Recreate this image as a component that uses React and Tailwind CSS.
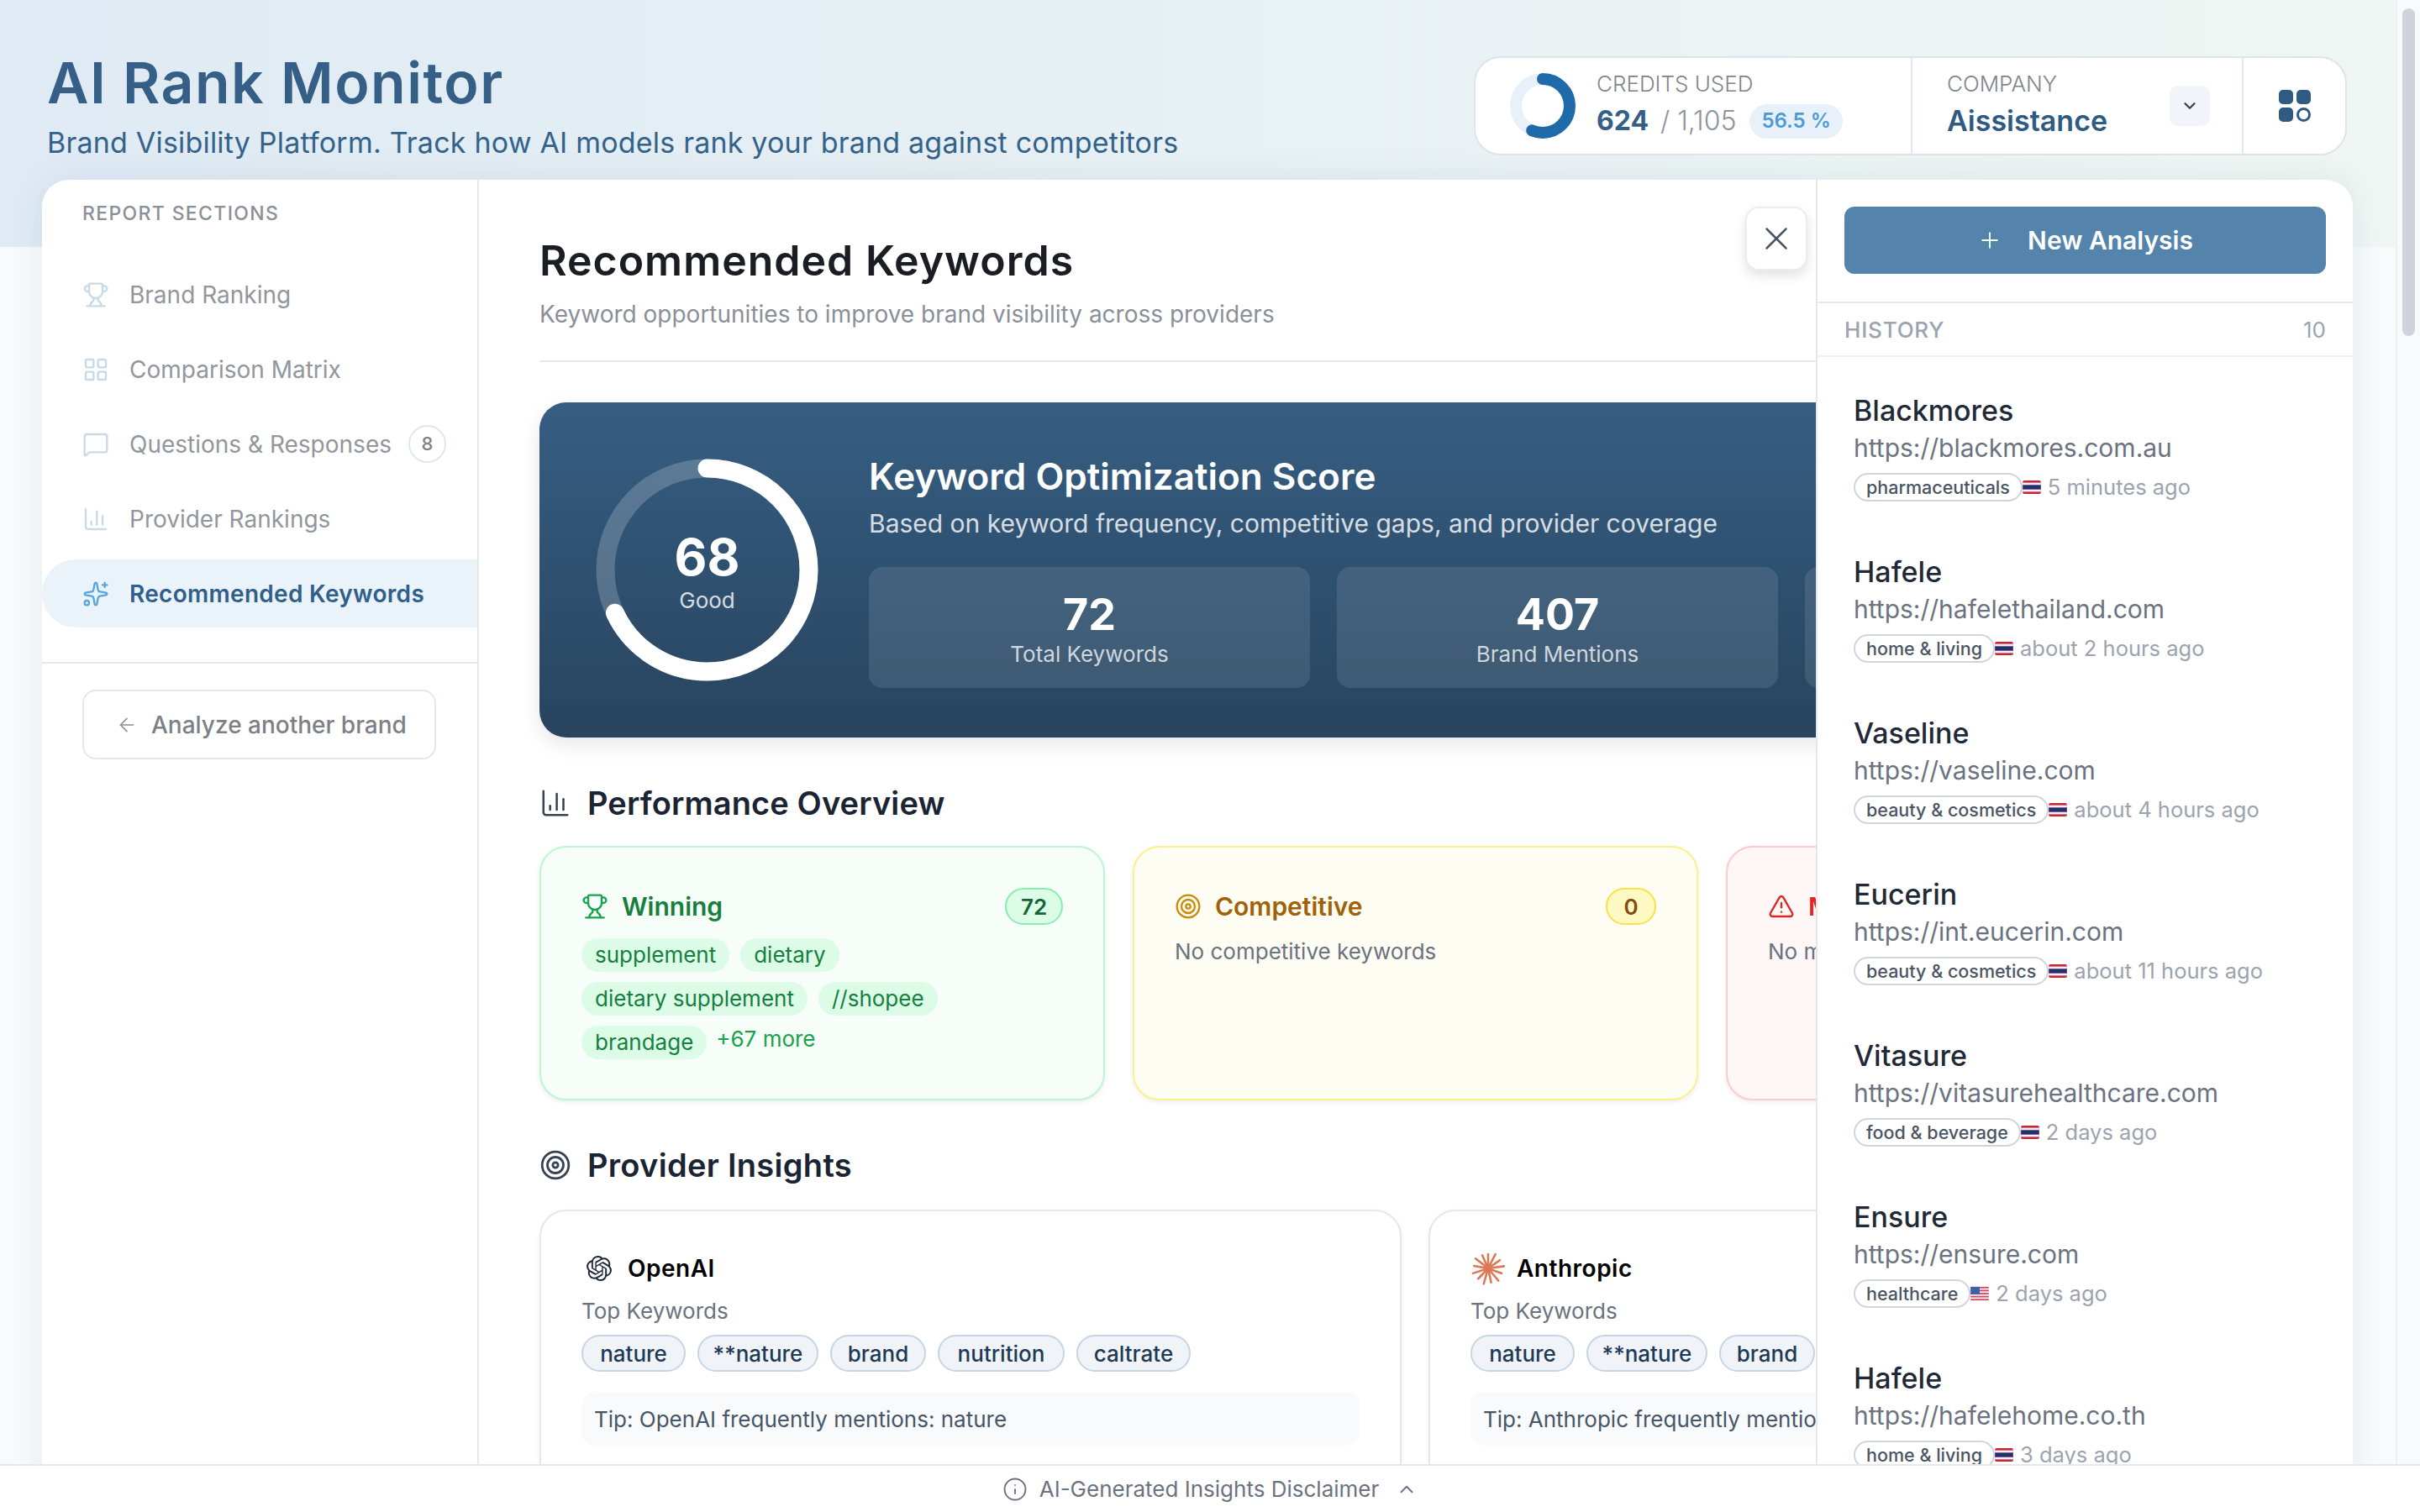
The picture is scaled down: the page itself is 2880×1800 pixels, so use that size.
import React from 'react';
import { Trophy, LayoutGrid, MessageSquare, ChartColumn, Sparkles, ArrowLeft, X, Plus, ChevronDown, ChevronUp, Info, Target, TriangleAlert } from 'lucide-react';
import { SiOpenai } from 'react-icons/si';

const NAV = [
  { label: 'Brand Ranking', icon: Trophy },
  { label: 'Comparison Matrix', icon: LayoutGrid },
  { label: 'Questions & Responses', icon: MessageSquare, badge: 8 },
  { label: 'Provider Rankings', icon: ChartColumn },
  { label: 'Recommended Keywords', icon: Sparkles, active: true },
];

const HISTORY = [
  { name: 'Blackmores', url: 'https://blackmores.com.au', tag: 'pharmaceuticals', flag: 'th', time: '5 minutes ago' },
  { name: 'Hafele', url: 'https://hafelethailand.com', tag: 'home & living', flag: 'th', time: 'about 2 hours ago' },
  { name: 'Vaseline', url: 'https://vaseline.com', tag: 'beauty & cosmetics', flag: 'th', time: 'about 4 hours ago' },
  { name: 'Eucerin', url: 'https://int.eucerin.com', tag: 'beauty & cosmetics', flag: 'th', time: 'about 11 hours ago' },
  { name: 'Vitasure', url: 'https://vitasurehealthcare.com', tag: 'food & beverage', flag: 'th', time: '2 days ago' },
  { name: 'Ensure', url: 'https://ensure.com', tag: 'healthcare', flag: 'us', time: '2 days ago' },
  { name: 'Hafele', url: 'https://hafelehome.co.th', tag: 'home & living', flag: 'th', time: '3 days ago' },
];

const WINNING_ROWS = [['supplement', 'dietary'], ['dietary supplement', '//shopee'], ['brandage']];
const KEYWORDS = [
  { label: 'nature', width: 'w-[124px]' },
  { label: '**nature', width: 'w-[144px]' },
  { label: 'brand', width: 'w-[114px]' },
  { label: 'nutrition', width: 'w-[151px]' },
  { label: 'caltrate', width: 'w-[136px]' },
];

function Flag({ code }) {
  if (code === 'us') {
    return (
      <svg viewBox="0 0 24 20" className="w-[22px] h-[18px] shrink-0">
        <rect y="1" width="24" height="18" rx="2" fill="#f3f4f6" />
        {[1, 5, 9, 13, 17].map(y => <rect key={y} y={y} width="24" height="2" fill="#d9485f" />)}
        <rect y="1" width="12" height="10" fill="#3f5fa8" />
      </svg>
    );
  }
  return (
    <svg viewBox="0 0 24 20" className="w-[22px] h-[18px] shrink-0">
      <rect y="1" width="24" height="18" rx="2" fill="#c8243c" />
      <rect y="4" width="24" height="12" fill="#f5f5f5" />
      <rect y="7" width="24" height="6" fill="#2d2a6e" />
    </svg>
  );
}

function AnthropicMark() {
  const rays = [0, 27, 55, 82, 110, 140, 168, 196, 224, 252, 280, 308, 336];
  return (
    <svg viewBox="0 0 40 40" className="w-[40px] h-[40px] shrink-0">
      {rays.map((r, i) => (
        <line key={r} x1="20" y1="20" x2="20" y2={i % 2 ? 1 : 3} stroke="#dc7853" strokeWidth="2.6" strokeLinecap="round" transform={`rotate(${r} 20 20)`} />
      ))}
    </svg>
  );
}

function Sidebar() {
  return (
    <aside className="w-[520px] shrink-0 border-r-2 border-[#e5e7eb] flex flex-col">
      <div className="pt-[28px] pl-[48px] text-[23px] leading-[24px] font-medium tracking-[1.35px] text-[#8b9098]">REPORT SECTIONS</div>
      <nav className="mt-[44px] flex flex-col gap-[8px]">
        {NAV.map(item => {
          const Icon = item.icon;
          return (
            <div key={item.label} className={`h-[81px] flex items-center pl-[48px] rounded-l-[40px] ${item.active ? 'bg-[#eaf2fa]' : ''}`}>
              <Icon strokeWidth={1.75} className={`w-[32px] h-[32px] shrink-0 ${item.active ? 'text-[#5aa5dc]' : 'text-[#c9d9e8]'}`} />
              <span className={`ml-[24px] text-[28px] ${item.active ? 'font-semibold tracking-[0.3px] text-[#2f5f8a]' : 'text-[#92969d]'}`}>{item.label}</span>
              {item.badge && (
                <span className="ml-auto mr-[37px] w-[45px] h-[45px] rounded-full border-2 border-[#e2e6ec] flex items-center justify-center text-[22px] font-medium text-[#7c8087]">{item.badge}</span>
              )}
            </div>
          );
        })}
      </nav>
      <div className="mt-[41px] border-t-2 border-[#e5e7eb] pt-[31px] pl-[48px]">
        <button className="w-[421px] h-[83px] rounded-[16px] border-2 border-[#e3e6ea] flex items-center pl-[38px] gap-[16px] text-[28px] font-medium text-[#7c8087]">
          <ArrowLeft strokeWidth={1.5} className="w-[26px] h-[26px] text-[#8b9098]" />
          Analyze another brand
        </button>
      </div>
    </aside>
  );
}

function ScoreRing() {
  const r = 121;
  const c = 2 * Math.PI * r;
  return (
    <div className="relative w-[267px] h-[267px] shrink-0">
      <svg viewBox="0 0 267 267" className="w-full h-full -rotate-90">
        <circle cx="133.5" cy="133.5" r={r} fill="none" stroke="rgba(255,255,255,0.2)" strokeWidth="22" />
        <circle cx="133.5" cy="133.5" r={r} fill="none" stroke="#fff" strokeWidth="22" strokeLinecap="round" strokeDasharray={`${c * 0.68} ${c}`} />
      </svg>
      <div className="absolute inset-0 flex flex-col items-center text-white">
        <div className="mt-[86px] text-[60px] leading-[64px] font-bold">68</div>
        <div className="mt-[4px] text-[26px] leading-[32px] text-white/80">Good</div>
      </div>
    </div>
  );
}

function Stat({ value, label }) {
  return (
    <div className="w-[525px] h-[144px] shrink-0 rounded-[16px] bg-white/10 flex flex-col items-center text-white">
      {value && <div className="mt-[29px] text-[52px] leading-[56px] font-bold">{value}</div>}
      {label && <div className="mt-[3px] text-[26px] leading-[32px] text-white/75">{label}</div>}
    </div>
  );
}

function OverviewCard({ tone, icon: Icon, title, count, children }) {
  const tones = {
    green: { box: 'border-[#bbf7d0] bg-[#f7fdf9]', icon: 'text-[#16a34a]', title: 'text-[#15803d]', badge: 'bg-[#dcfce7] border-[#86efac] text-[#166534] w-[69px]' },
    yellow: { box: 'border-[#fef08a] bg-[#fefdf3]', icon: 'text-[#ca8a04]', title: 'text-[#a16207]', badge: 'bg-[#fef9c3] border-[#fde047] text-[#854d0e] w-[60px]' },
    red: { box: 'border-[#fecaca] bg-[#fff6f6]', icon: 'text-[#dc2626]', title: 'text-[#dc2626]', badge: 'bg-[#fee2e2] border-[#fca5a5] text-[#991b1b] w-[60px]' },
  }[tone];
  return (
    <div className={`w-[673px] h-[303px] shrink-0 rounded-[32px] border-2 p-[48px] shadow-[0_2px_6px_rgba(0,0,0,0.08)] ${tones.box}`}>
      <div className="h-[44px] flex items-center justify-between">
        <div className="flex items-center gap-[16px]">
          <Icon strokeWidth={1.75} className={`w-[32px] h-[32px] ${tones.icon}`} />
          <span className={`text-[30px] font-semibold ${tones.title}`}>{title}</span>
        </div>
        <span className={`h-[44px] rounded-full border-2 flex items-center justify-center text-[26px] font-semibold ${tones.badge}`}>{count}</span>
      </div>
      <div className="mt-[16px]">{children}</div>
    </div>
  );
}

function ProviderCard({ name, logo }) {
  return (
    <div className="w-[1026px] h-[360px] shrink-0 rounded-[32px] border-2 border-[#e5e7eb] bg-white px-[48px] pt-[50px] shadow-[0_2px_6px_rgba(0,0,0,0.05)]">
      <div className="h-[36px] flex items-center gap-[18px]">
        <div className="w-[37px] pl-[4px] flex justify-center">{logo}</div>
        <span className="text-[28px] font-semibold tracking-[0.5px] text-black">{name}</span>
      </div>
      <div className="mt-[17px] text-[26px] leading-[32px] text-[#6b7280]">Top Keywords</div>
      <div className="mt-[12px] flex gap-[14px]">
        {KEYWORDS.map(k => (
          <span key={k.label} className={`h-[44px] rounded-full border-2 border-[#c5d5e3] bg-[#f0f4f8] flex items-center justify-center text-[26px] font-medium text-[#1e3a55] ${k.width}`}>{k.label}</span>
        ))}
      </div>
      <div className="mt-[24px] h-[64px] w-[926px] rounded-[16px] bg-[#f8fafc] flex items-center px-[15px] text-[26px] text-[#475569]">Tip: {name} frequently mentions: nature</div>
    </div>
  );
}

function MainPanel() {
  return (
    <section className="relative w-[1591px] shrink-0 overflow-hidden pl-[72px] pt-[68px]">
      <button className="absolute left-[1507px] top-[32px] w-[74px] h-[76px] rounded-[16px] bg-white border-2 border-[#ececec] shadow-[0_6px_14px_rgba(0,0,0,0.12)] flex items-center justify-center">
        <X strokeWidth={1.3} className="w-[46px] h-[46px] text-[#4b5563]" />
      </button>
      <h2 className="text-[50px] leading-[56px] font-semibold tracking-[1px] text-[#1a1d23]">Recommended Keywords</h2>
      <p className="mt-[18px] text-[28px] leading-[36px] text-[#8b8f97]">Keyword opportunities to improve brand visibility across providers</p>
      <div className="mt-[37px] h-[2px] bg-[#e5e7eb]" />

      <div className="mt-[48px] w-[2200px] h-[399px] rounded-[32px] bg-gradient-to-b from-[#365e83] to-[#28445e] shadow-[0_8px_24px_rgba(0,0,0,0.1)] flex pl-[66px] pt-[66px]">
        <ScoreRing />
        <div className="ml-[59px] -mt-[4px]">
          <h3 className="text-[44px] leading-[52px] font-semibold text-white">Keyword Optimization Score</h3>
          <p className="mt-[10px] text-[30px] leading-[40px] text-white/80">Based on keyword frequency, competitive gaps, and provider coverage</p>
          <div className="mt-[32px] flex gap-[32px]">
            <Stat value="72" label="Total Keywords" />
            <Stat value="407" label="Brand Mentions" />
            <Stat />
          </div>
        </div>
      </div>

      <div className="mt-[54px] h-[48px] flex items-center gap-[19px] text-[#1a2433]">
        <ChartColumn strokeWidth={1.6} className="w-[38px] h-[38px] text-[#374151]" />
        <h3 className="text-[38px] font-semibold tracking-[0.1px]">Performance Overview</h3>
      </div>
      <div className="mt-[27px] flex gap-[33px] w-[2200px]">
        <OverviewCard tone="green" icon={Trophy} title="Winning" count="72">
          <div className="flex flex-col gap-[12px]">
            {WINNING_ROWS.map((row, i) => (
              <div key={i} className="flex gap-[13px]">
                {row.map(k => <span key={k} className="h-[40px] px-[16px] rounded-full bg-[#dcfce7] flex items-center text-[26px] leading-[32px] text-[#15803d]">{k}</span>)}
                {i === 2 && <span className="-ml-[2px] text-[26px] leading-[32px] text-[#16a34a]">+67 more</span>}
              </div>
            ))}
          </div>
        </OverviewCard>
        <OverviewCard tone="yellow" icon={Target} title="Competitive" count="0">
          <p className="text-[26px] leading-[32px] text-[#6b7280]">No competitive keywords</p>
        </OverviewCard>
        <OverviewCard tone="red" icon={TriangleAlert} title="Missing" count="0">
          <p className="text-[26px] leading-[32px] text-[#6b7280]">No missing keywords</p>
        </OverviewCard>
      </div>

      <div className="mt-[53px] h-[48px] flex items-center gap-[19px] text-[#1a2433]">
        <Target strokeWidth={1.75} className="w-[38px] h-[38px] text-[#374151]" />
        <h3 className="text-[38px] font-semibold tracking-[0.3px]">Provider Insights</h3>
      </div>
      <div className="mt-[29px] flex gap-[32px] w-[2200px]">
        <ProviderCard name="OpenAI" logo={<SiOpenai className="w-[30px] h-[30px] text-[#1f2937]" />} />
        <ProviderCard name="Anthropic" logo={<AnthropicMark />} />
      </div>
    </section>
  );
}

function HistoryPanel() {
  return (
    <aside className="w-[639px] shrink-0 border-l-2 border-[#e5e7eb] overflow-hidden flex flex-col">
      <div className="px-[32px] pt-[32px] pb-[33px] border-b-2 border-[#e5e7eb]">
        <button className="w-full h-[80px] rounded-[12px] bg-[#5484ab] flex items-center justify-center gap-[30px] text-white text-[30px] font-semibold">
          <Plus strokeWidth={1.5} className="w-[30px] h-[30px]" />
          New Analysis
        </button>
      </div>
      <div className="h-[64px] px-[32px] border-b-2 border-[#f0f1f3] flex items-center justify-between text-[26px] text-[#9ca3af]">
        <span className="font-medium tracking-[0.8px]">HISTORY</span>
        <span>10</span>
      </div>
      <div className="pl-[43px] pt-[42px] flex flex-col gap-[62px]">
        {HISTORY.map((h, i) => (
          <div key={i}>
            <div className="text-[34px] leading-[44px] font-medium text-[#1f2937]">{h.name}</div>
            <div className="mt-[2px] text-[30px] leading-[40px] text-[#6b7280]">{h.url}</div>
            <div className="mt-[10px] h-[34px] flex items-center">
              <span className="h-[34px] px-[13px] rounded-full border-2 border-[#d1d5db] flex items-center text-[21.5px] leading-[26px] font-medium text-[#4b5563]">{h.tag}</span>
              <Flag code={h.flag} />
              <span className="ml-[8px] text-[25.5px] leading-[30px] text-[#9ca3af]">{h.time}</span>
            </div>
          </div>
        ))}
      </div>
    </aside>
  );
}

export default function App() {
  return (
    <div className="relative h-[1800px] overflow-hidden flex bg-[#f8fafc] font-['Inter','Liberation_Sans',sans-serif]">
      <div className="w-[2851px] shrink-0 flex flex-col">
        <header className="h-[294px] shrink-0 bg-gradient-to-r from-[#dfeaf4] to-[#eff6f3] flex justify-between pl-[56px] pr-[58px]">
          <div>
            <h1 className="mt-[62px] text-[68px] leading-[72px] font-semibold tracking-[1.5px] text-[#355f86]">AI Rank Monitor</h1>
            <p className="mt-[16px] text-[34px] leading-[40px] tracking-[0.2px] text-[#33628a]">Brand Visibility Platform. Track how AI models rank your brand against competitors</p>
          </div>
          <div className="mt-[67px] w-[1039px] h-[118px] rounded-[32px] bg-white border-2 border-[#dfe4ea] flex">
            <div className="w-[520px] shrink-0 border-r-2 border-[#dbe8f3] flex items-center pl-[40px]">
              <svg viewBox="0 0 80 80" className="w-[80px] h-[80px] shrink-0 -rotate-90">
                <circle cx="40" cy="40" r="32" fill="none" stroke="#e8f1fa" strokeWidth="14" />
                <circle cx="40" cy="40" r="32" fill="none" stroke="#1f6aa8" strokeWidth="14" strokeLinecap="round" strokeDasharray="113.6 201" />
              </svg>
              <div className="ml-[24px] -mt-[2px]">
                <div className="text-[26px] leading-[32px] font-light text-[#7f848c]">CREDITS USED</div>
                <div className="mt-[6px] flex items-center">
                  <span className="text-[32px] leading-[44px] font-bold text-[#355f86]">624</span>
                  <span className="ml-[14px] text-[32px] leading-[44px] font-light text-[#8e939c]">/ 1,105</span>
                  <span className="ml-[16px] h-[41px] px-[14px] rounded-full bg-[#e8f1fa] flex items-center text-[24px] leading-[30px] font-semibold text-[#4d9ad6]">56.5 %</span>
                </div>
              </div>
            </div>
            <div className="w-[394px] shrink-0 border-r-2 border-[#dbe8f3] flex items-center pl-[41px] pr-[38px] justify-between">
              <div className="-mt-[2px]">
                <div className="text-[26px] leading-[32px] font-light text-[#7f848c]">COMPANY</div>
                <div className="mt-[6px] text-[34px] leading-[44px] font-semibold text-[#2f5a82]">Aissistance</div>
              </div>
              <span className="w-[48px] h-[48px] rounded-[10px] bg-[#f1f5f9] flex items-center justify-center">
                <ChevronDown strokeWidth={2.5} className="w-[22px] h-[22px] text-[#374151]" />
              </span>
            </div>
            <div className="flex-1 flex items-center justify-center">
              <svg viewBox="0 0 38 38" className="w-[38px] h-[38px] text-[#2f5a82]" fill="currentColor">
                <rect width="17" height="17" rx="5" />
                <rect x="21" width="17" height="17" rx="5" />
                <rect y="21" width="17" height="17" rx="5" />
                <circle cx="29.5" cy="29.5" r="7" fill="none" stroke="currentColor" strokeWidth="3" />
              </svg>
            </div>
          </div>
        </header>
        <main className="-mt-[80px] ml-[50px] w-[2750px] h-[1586px] shrink-0 rounded-t-[32px] bg-white shadow-[0_0_40px_rgba(30,60,90,0.08)] flex overflow-hidden">
          <Sidebar />
          <MainPanel />
          <HistoryPanel />
        </main>
      </div>

      <div className="flex-1 border-l-2 border-[#eef1f4] bg-[#f8fafc] px-[6px] pt-[10px]">
        <div className="h-[390px] rounded-full bg-[#cfd4da]" />
      </div>

      <footer className="absolute left-0 right-0 bottom-0 h-[57px] bg-white border-t-2 border-[#e5e7eb] flex items-center justify-center gap-[14px] text-[26px] text-[#6b7280]">
        <Info strokeWidth={1.5} className="w-[30px] h-[30px]" />
        AI-Generated Insights Disclaimer
        <ChevronUp strokeWidth={1.75} className="ml-[6px] w-[26px] h-[26px]" />
      </footer>
    </div>
  );
}
